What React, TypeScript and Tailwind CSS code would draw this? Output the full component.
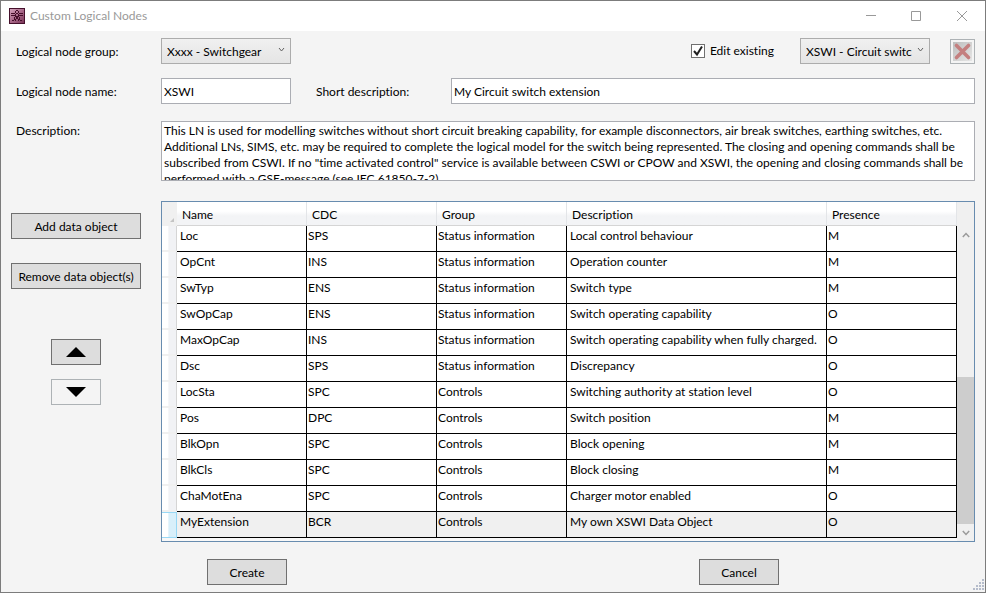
import React from 'react';

interface DataObject {
  name: string;
  cdc: string;
  group: string;
  description: string;
  presence: 'M' | 'O';
}

const dataObjects: DataObject[] = [
  { name: 'Loc', cdc: 'SPS', group: 'Status information', description: 'Local control behaviour', presence: 'M' },
  { name: 'OpCnt', cdc: 'INS', group: 'Status information', description: 'Operation counter', presence: 'M' },
  { name: 'SwTyp', cdc: 'ENS', group: 'Status information', description: 'Switch type', presence: 'M' },
  { name: 'SwOpCap', cdc: 'ENS', group: 'Status information', description: 'Switch operating capability', presence: 'O' },
  { name: 'MaxOpCap', cdc: 'INS', group: 'Status information', description: 'Switch operating capability when fully charged.', presence: 'O' },
  { name: 'Dsc', cdc: 'SPS', group: 'Status information', description: 'Discrepancy', presence: 'O' },
  { name: 'LocSta', cdc: 'SPC', group: 'Controls', description: 'Switching authority at station level', presence: 'O' },
  { name: 'Pos', cdc: 'DPC', group: 'Controls', description: 'Switch position', presence: 'M' },
  { name: 'BlkOpn', cdc: 'SPC', group: 'Controls', description: 'Block opening', presence: 'M' },
  { name: 'BlkCls', cdc: 'SPC', group: 'Controls', description: 'Block closing', presence: 'M' },
  { name: 'ChaMotEna', cdc: 'SPC', group: 'Controls', description: 'Charger motor enabled', presence: 'O' },
  { name: 'MyExtension', cdc: 'BCR', group: 'Controls', description: 'My own XSWI Data Object', presence: 'O' },
];

const columns = ['Name', 'CDC', 'Group', 'Description', 'Presence'];

const description =
  'This LN is used for modelling switches without short circuit breaking capability, for example disconnectors, air break switches, earthing switches, etc.\n' +
  'Additional LNs, SIMS, etc. may be required to complete the logical model for the switch being represented. The closing and opening commands shall be ' +
  'subscribed from CSWI. If no "time activated control" service is available between CSWI or CPOW and XSWI, the opening and closing commands shall be ' +
  'performed with a GSE-message (see IEC 61850-7-2).';

const buttonClass = 'h-[26px] border border-[#707070] bg-[#dddddd] pt-[2px] hover:bg-[#bee6fd]';
const inputClass = 'h-[26px] border border-[#abadb3] bg-white px-[2px]';
const labelClass = 'shrink-0 pt-[2px]';

const AppIcon = () => (
  <svg width="16" height="16" viewBox="0 0 16 16" shapeRendering="crispEdges" aria-hidden="true">
    <defs>
      <linearGradient id="app-icon" x1="0" y1="0" x2="1" y2="1">
        <stop offset="0" stopColor="#d3a3bb" />
        <stop offset="0.5" stopColor="#a9698a" />
        <stop offset="1" stopColor="#7a3557" />
      </linearGradient>
    </defs>
    <rect width="16" height="16" fill="#45102b" />
    <rect x="1" y="1" width="14" height="14" fill="url(#app-icon)" />
    <path
      d="M7 2h2v1h-2zM6 3h1v2h-1zM9 3h1v2h-1zM2 5h4v1h-4zM7 5h2v1h-2zM10 5h4v1h-4zM2 7h4v1h-4zM6 6h1v3h-1zM9 6h1v3h-1zM10 7h4v1h-4zM7 8h2v2h-2zM5 9h1v3h-1zM10 9h1v3h-1zM6 11h1v2h-1zM9 11h1v2h-1zM3 12h2v1h-2zM7 10h2v1h-2zM11 12h2v1h-2z"
      fill="#45102b"
    />
  </svg>
);

const Chevron = ({ up = false }: { up?: boolean }) => (
  <svg width="8" height="6" viewBox="0 0 8 6" fill="none" stroke="#9a9a9a" strokeWidth="1.5" aria-hidden="true">
    <path d={up ? 'M0.8 5L4 1.5L7.2 5' : 'M0.8 1L4 4.5L7.2 1'} />
  </svg>
);

const ComboBox = ({ label, value }: { label: string; value: string }) => (
  <div className="relative w-[130px] shrink-0">
    <select
      aria-label={label}
      defaultValue={value}
      className="block h-[26px] w-full appearance-none overflow-hidden border border-[#acacac] bg-linear-to-b from-[#f0f0f0] to-[#e5e5e5] pt-px pr-4 pl-[5px]"
    >
      <option>{value}</option>
    </select>
    <svg className="pointer-events-none absolute top-[9px] right-[6px]" width="7" height="6" viewBox="0 0 7 6" fill="none" stroke="#606060" aria-hidden="true">
      <path d="M1 1L3.5 4L6 1" />
    </svg>
  </div>
);

const TitleBar = () => (
  <header className="flex h-[30px] items-center bg-white pl-2 text-[#999999]">
    <AppIcon />
    <h1 className="ml-[5px] flex-1">Custom Logical Nodes</h1>
    <button aria-label="Minimize" className="flex h-full w-[45px] items-center justify-center">
      <svg width="10" height="10" viewBox="0 0 10 10" stroke="currentColor"><path d="M0 4.5H10" /></svg>
    </button>
    <button aria-label="Maximize" className="flex h-full w-[46px] items-center justify-center">
      <svg width="10" height="10" viewBox="0 0 10 10" fill="none" stroke="currentColor"><path d="M0.5 0.5h9v9h-9z" /></svg>
    </button>
    <button aria-label="Close" className="flex h-full w-[46px] items-center justify-center">
      <svg width="10" height="10" viewBox="0 0 10 10" stroke="currentColor"><path d="M0 0L10 10M10 0L0 10" /></svg>
    </button>
  </header>
);

const ScrollBar = () => (
  <div className="flex w-[17px] shrink-0 flex-col bg-[#f0f0f0] pt-6">
    <button aria-label="Scroll up" className="flex h-[17px] items-center justify-center"><Chevron up /></button>
    <div className="flex flex-1 flex-col justify-end">
      <div className="h-[147px] bg-[#cdcdcd]" />
    </div>
    <button aria-label="Scroll down" className="flex h-[17px] items-center justify-center"><Chevron /></button>
  </div>
);

const DataObjectTable = () => (
  <div className="flex min-w-0 flex-1 border border-[#688caf] bg-white">
    <div className="min-w-0 flex-1 bg-[#f8f8f8] pb-[3px]">
      <table className="w-full table-fixed border-separate border-spacing-0 text-left">
        <colgroup>
          <col className="w-[15px]" />
          <col className="w-[130px]" />
          <col className="w-[130px]" />
          <col className="w-[130px]" />
          <col />
          <col className="w-[130px]" />
        </colgroup>
        <thead>
          <tr className="h-6">
            <th className="bg-[#f0f0f0] p-0 align-bottom">
              <svg className="mr-[3px] mb-1 ml-auto" width="4" height="4" viewBox="0 0 4 4" fill="#c4c4c4" aria-hidden="true"><path d="M4 0v4H0z" /></svg>
            </th>
            {columns.map((column) => (
              <th key={column} className="border-r border-b border-[#d5d5d5] border-r-[#e3e5e8] bg-linear-to-b from-white from-40% to-[#f3f4f6] to-60% p-0 pt-[2px] pl-[5px] font-normal">
                {column}
              </th>
            ))}
          </tr>
        </thead>
        <tbody>
          {dataObjects.map((item) => {
            const selected = item.name === 'MyExtension';
            const cell = 'truncate border-r border-b border-black p-0 pt-[2px] align-top text-clip';
            return (
              <tr key={item.name} className={selected ? 'h-[26px] bg-[#f0f0f0]' : 'h-[26px] bg-white'}>
                <td
                  className={
                    selected
                      ? 'border border-l-0 border-[#98d8f5] bg-linear-to-r from-white from-40% to-[#d8effa] to-50% p-0'
                      : 'border-r border-b-2 border-[#d5d5d5] border-b-[#f0f0f0] bg-linear-to-r from-white from-40% to-[#f1f2f5] to-50% p-0'
                  }
                />
                <td className={`${cell} pl-[3px]`}>{item.name}</td>
                <td className={`${cell} pl-px`}>{item.cdc}</td>
                <td className={`${cell} pl-px`}>{item.group}</td>
                <td className={`${cell} pl-[3px]`}>{item.description}</td>
                <td className={`${cell} pl-px`}>{item.presence}</td>
              </tr>
            );
          })}
        </tbody>
      </table>
    </div>
    <ScrollBar />
  </div>
);

const App: React.FC = () => {
  return (
    <div className="flex min-h-screen flex-col border border-[#7c7c7c] bg-[#f4f4f4] font-[Lato,'Open_Sans',sans-serif] text-xs text-black [font-variant-ligatures:none]">
      <TitleBar />

      <main className="flex flex-col px-[10px] pt-[7px]">
        {/* Group selection */}
        <div className="flex items-center">
          <span className={`${labelClass} w-[150px] pl-[5px]`}>Logical node group:</span>
          <ComboBox label="Logical node group" value="Xxxx - Switchgear" />
          <label className="mr-[26px] ml-auto flex items-center gap-[5px]">
            <span className="relative flex">
              <input type="checkbox" defaultChecked className="peer h-[14px] w-[14px] appearance-none border border-[#707070] bg-white" />
              <svg className="pointer-events-none absolute top-0 left-0 hidden peer-checked:block" width="14" height="14" viewBox="0 0 14 14" fill="none" stroke="#212121" strokeWidth="2" aria-hidden="true">
                <path d="M3 7L6 10.5L11 2.5" />
              </svg>
            </span>
            Edit existing
          </label>
          <ComboBox label="Existing logical node" value="XSWI - Circuit switc" />
          <button aria-label="Delete logical node" className="ml-5 flex h-[25px] w-[25px] items-center justify-center border border-[#adb2b5] bg-[#f4f4f4]">
            <svg width="19" height="19" viewBox="0 0 19 19" aria-hidden="true">
              <defs>
                <linearGradient id="delete-bg" x1="0" y1="0" x2="1" y2="1">
                  <stop offset="0" stopColor="#bdbdbd" />
                  <stop offset="1" stopColor="#e6e6e6" />
                </linearGradient>
              </defs>
              <rect width="19" height="19" fill="url(#delete-bg)" />
              <path d="M3.5 3.5L15.5 15.5M15.5 3.5L3.5 15.5" stroke="#c47f7f" strokeWidth="3.6" strokeLinecap="round" />
            </svg>
          </button>
        </div>

        {/* Name and short description */}
        <div className="mt-[14px] flex items-center">
          <label htmlFor="ln-name" className={`${labelClass} w-[150px] pl-[5px]`}>Logical node name:</label>
          <input id="ln-name" defaultValue="XSWI" className={`${inputClass} w-[130px]`} />
          <label htmlFor="ln-short" className={`${labelClass} w-[160px] pl-[25px]`}>Short description:</label>
          <input id="ln-short" defaultValue="My Circuit switch extension" className={`${inputClass} min-w-0 flex-1`} />
        </div>

        <div className="mt-[17px] flex items-start">
          <label htmlFor="ln-description" className={`${labelClass} w-[150px] pl-[5px]`}>Description:</label>
          <textarea
            id="ln-description"
            defaultValue={description}
            className="block h-[60px] min-w-0 flex-1 resize-none overflow-hidden border border-[#abadb3] bg-white px-[2px] pt-px"
          />
        </div>

        {/* Data objects */}
        <div className="mt-5 flex items-start">
          <div className="flex w-[150px] shrink-0 flex-col pt-3 pr-5">
            <button className={buttonClass}>Add data object</button>
            <button className={`${buttonClass} mt-6 whitespace-nowrap`}>Remove data object(s)</button>
            <button aria-label="Move up" className="mt-[50px] flex h-[26px] w-[50px] items-center justify-center self-center border border-[#707070] bg-[#dddddd]">
              <svg width="20" height="10" viewBox="0 0 20 10" aria-hidden="true"><path d="M10 0L20 10H0z" /></svg>
            </button>
            <button aria-label="Move down" className="mt-[14px] flex h-[26px] w-[50px] items-center justify-center self-center border border-[#adb2b5] bg-[#f4f4f4]">
              <svg width="20" height="10" viewBox="0 0 20 10" aria-hidden="true"><path d="M0 0H20L10 10z" /></svg>
            </button>
          </div>
          <DataObjectTable />
        </div>
      </main>

      <footer className="relative mt-[17px] grid grid-cols-2 justify-items-center">
        <button className={`${buttonClass} w-20`}>Create</button>
        <button className={`${buttonClass} w-20`}>Cancel</button>
        <svg className="absolute right-px -bottom-[5px]" width="11" height="11" viewBox="0 0 11 11" fill="#b5bccb" aria-hidden="true">
          <path d="M9 0h2v2h-2zM6 3h2v2h-2zM9 3h2v2h-2zM3 6h2v2h-2zM6 6h2v2h-2zM9 6h2v2h-2zM0 9h2v2h-2zM3 9h2v2h-2zM6 9h2v2h-2zM9 9h2v2h-2z" />
        </svg>
      </footer>
    </div>
  );
};

export default App;
